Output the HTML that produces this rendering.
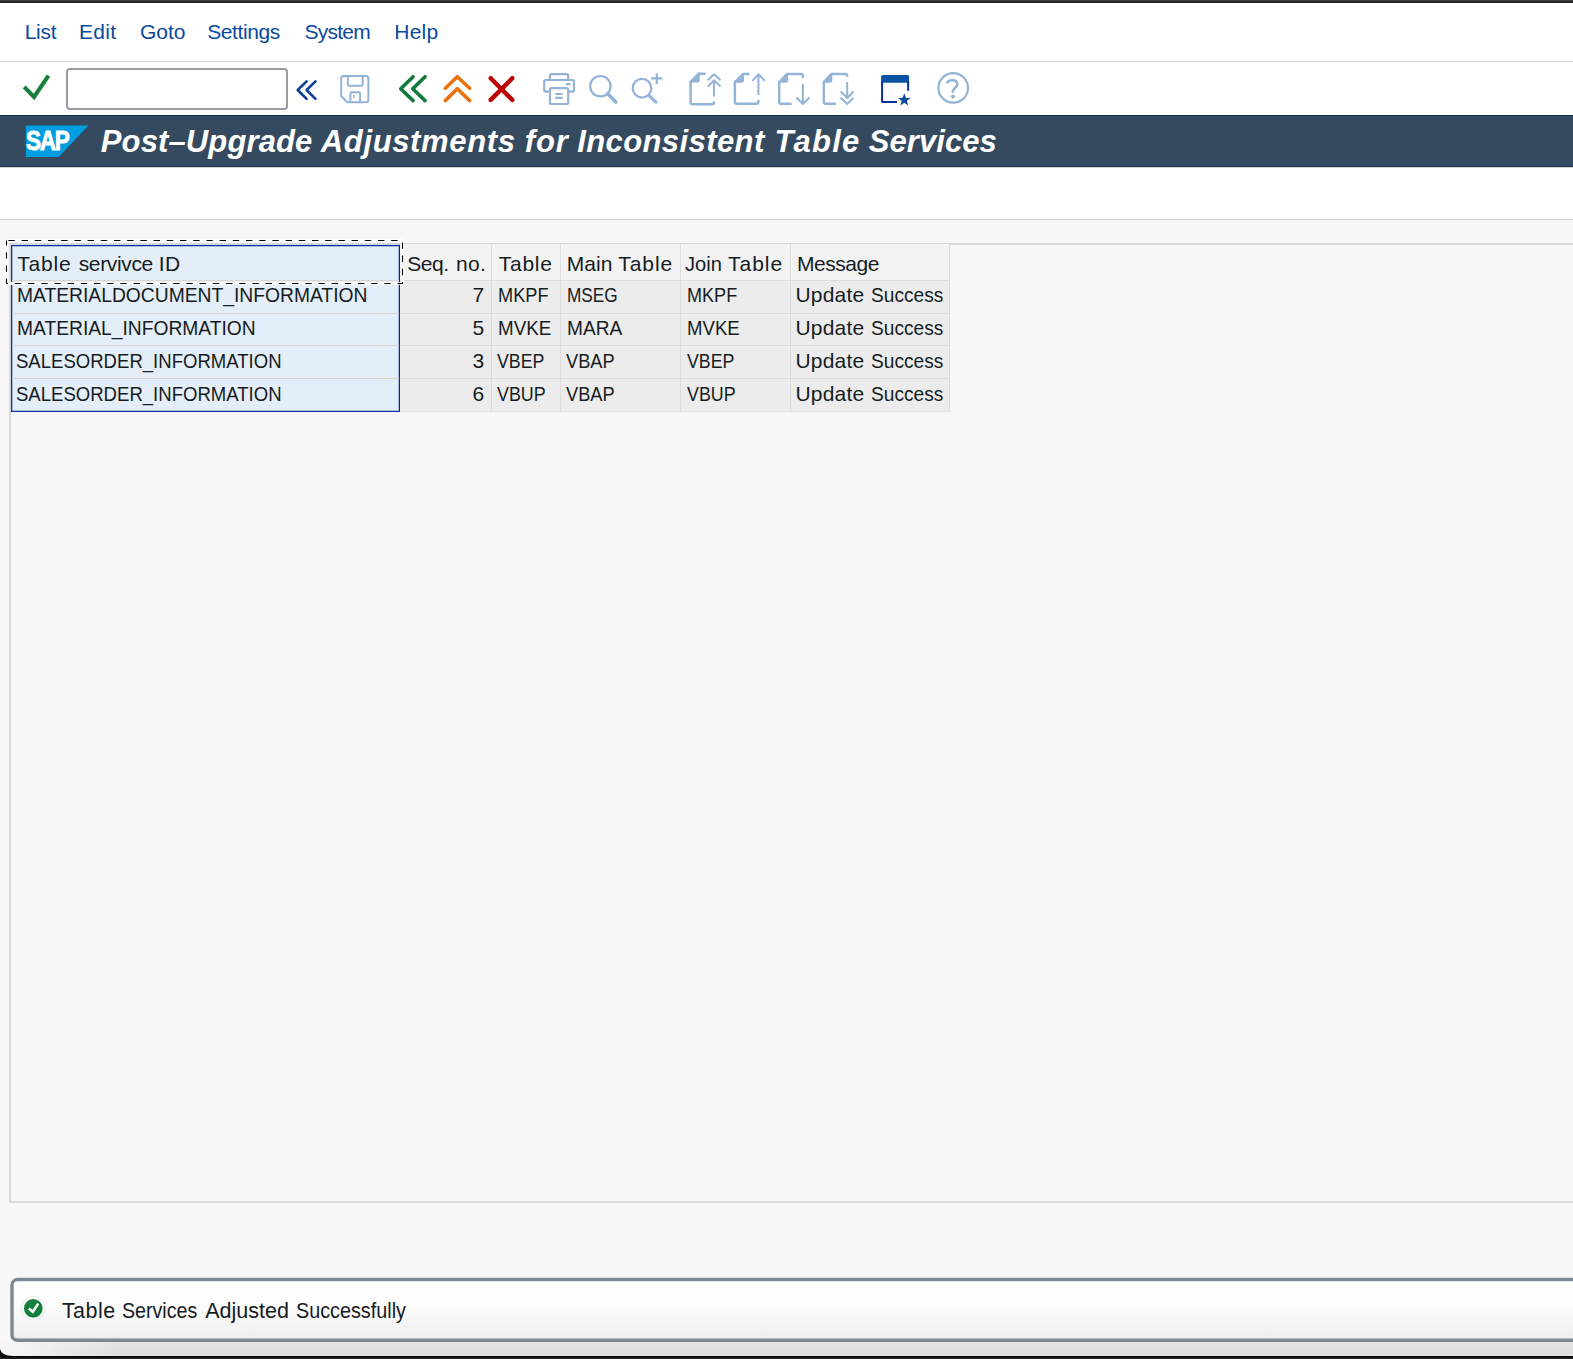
<!DOCTYPE html>
<html><head><meta charset="utf-8"><title>SAP</title>
<style>
*{box-sizing:border-box}
html,body{margin:0;padding:0}
body{width:1573px;height:1359px;overflow:hidden;position:relative;background:#f7f7f7;font-family:"Liberation Sans",sans-serif;color:#1d232b}
.a{position:absolute}
.t{position:absolute;white-space:pre;line-height:20px;font-size:20px}
#topband{left:0;top:0;width:1573px;height:3px;background:linear-gradient(#444,#1c1c1c)}
#upper{left:0;top:3px;width:1573px;height:216px;background:#fff}
#menuline{left:0;top:61px;width:1573px;height:1px;background:#d6d6d6}
#cmd{left:66px;top:68px;width:222px;height:42px;border:2px solid #959ca4;border-radius:4px;background:#fff}
#titlebar{left:0;top:115px;width:1573px;height:52px;background:#354a5f;border-top:1px solid #0c2c4b;border-bottom:1px solid #14334f}
#titleshadow{left:0;top:167px;width:1573px;height:1px;background:#d8d8d8}
#line219{left:0;top:219px;width:1573px;height:1px;background:#d3d3d3}
#cont-top{left:9px;top:243.25px;width:1564px;height:1.5px;background:#d8d8d8}
#cont-left{left:9px;top:243px;width:1.5px;height:959px;background:#d9d9d9}
#cont-bot{left:9px;top:1201px;width:1564px;height:1.5px;background:#d9d9d9}
.hdr{background:#f2f2f2}
.row{background:#ececec}
.vl{position:absolute;width:1px;background:#dcdcdc}
.hl{position:absolute;height:1px;background:#dcdcdc}
#selcol{left:11px;top:245px;width:389px;height:167px;border:1px solid #0b2fa0;box-shadow:inset 0 0 0 0.3px #0b2fa0;background:#e4eef8}
#botband{left:0;top:1356px;width:1573px;height:3px;background:linear-gradient(#000 0,#000 1px,#1c1c1c 1px)}
#belowstatus{left:0;top:1340px;width:1573px;height:16px;background:linear-gradient(to right,#f6f6f6 0,#f3f3f3 25px,rgba(243,243,243,0) 120px),linear-gradient(#e6e6e6 0,#e4e4e4 20%,#dcdcdc 85%,#e6e6e6 100%)}
</style></head><body>
<div id="topband" class="a"></div>
<div id="upper" class="a"></div>
<div class="t" style="left:24.70px;top:21.32px;font-size:21px;line-height:21px;color:#0a4a9c;font-weight:normal;font-style:normal;letter-spacing:-0.267px;">List</div>
<div class="t" style="left:79.00px;top:21.32px;font-size:21px;line-height:21px;color:#0a4a9c;font-weight:normal;font-style:normal;letter-spacing:0.333px;">Edit</div>
<div class="t" style="left:140.00px;top:21.32px;font-size:21px;line-height:21px;color:#0a4a9c;font-weight:normal;font-style:normal;letter-spacing:0.000px;">Goto</div>
<div class="t" style="left:207.20px;top:21.32px;font-size:21px;line-height:21px;color:#0a4a9c;font-weight:normal;font-style:normal;letter-spacing:-0.414px;">Settings</div>
<div class="t" style="left:304.40px;top:21.32px;font-size:21px;line-height:21px;color:#0a4a9c;font-weight:normal;font-style:normal;letter-spacing:-0.720px;">System</div>
<div class="t" style="left:394.30px;top:21.32px;font-size:21px;line-height:21px;color:#0a4a9c;font-weight:normal;font-style:normal;letter-spacing:0.233px;">Help</div>
<div id="menuline" class="a"></div>
<div id="cmd" class="a"></div>
<svg class="a" style="left:0;top:60px" width="1000" height="55" viewBox="0 60 1000 55">
<g fill="none" stroke-linejoin="miter">
<path d="M24.2 86.9 L34 97 L48.5 75.6" stroke="#14803c" stroke-width="4.1"/>
</g>
<g fill="none" stroke="#0a3f9a" stroke-width="2.6" stroke-linecap="round" stroke-linejoin="round">
<path d="M306.6 81.4 L297.7 90 L306.6 98.9"/><path d="M315.5 81.4 L306.6 90 L315.5 98.9"/>
</g>
<g fill="none" stroke="#93b3d7" stroke-width="2" stroke-linejoin="round">
<path d="M343.7 76 H366 Q368.4 76 368.4 78.5 V99.8 Q368.4 102.3 366 102.3 H347.2 L341.2 96 V78.5 Q341.2 76 343.7 76 Z"/>
<path d="M347.8 76 V84.2 Q347.8 85.7 349.3 85.7 H361.2 Q362.7 85.7 362.7 84.2 V76"/>
<path d="M350.4 102.3 V93.8 Q350.4 92.3 351.9 92.3 H358.6 Q360.1 92.3 360.1 93.8 V102.3"/>
<path d="M353.8 95 V98" stroke-width="1.6"/>
</g>
<g fill="none" stroke="#117b3b" stroke-width="3.6" stroke-linecap="round" stroke-linejoin="round">
<path d="M413.1 76.7 L400.7 88.7 L413.1 100.6"/><path d="M425.1 76.7 L412.7 88.7 L425.1 100.6"/>
</g>
<g fill="none" stroke="#e9730c" stroke-width="3.6" stroke-linecap="round" stroke-linejoin="round">
<path d="M445.3 88.2 L457.3 76.7 L469.7 88.2"/><path d="M445.3 100.6 L457.3 88.7 L469.7 100.6"/>
</g>
<g fill="none" stroke="#bb0000" stroke-width="4.4" stroke-linecap="round">
<path d="M490.7 78.2 L512.3 99.9"/><path d="M512.3 78.2 L490.7 99.9"/>
</g>
<g fill="none" stroke="#93b3d7" stroke-width="2.2" stroke-linejoin="round" stroke-linecap="round">
<path d="M550 80 V75.7 Q550 74.2 551.5 74.2 H566.7 Q568.2 74.2 568.2 75.7 V80"/>
<path d="M550 91.6 H545.7 Q544.2 91.6 544.2 90.1 V81.5 Q544.2 80 545.7 80 H572.5 Q574 80 574 81.5 V90.1 Q574 91.6 572.5 91.6 H568.2"/>
<path d="M550 89.7 Q550 88.2 551.5 88.2 H566.7 Q568.2 88.2 568.2 89.7 V102.5 Q568.2 104 566.7 104 H551.5 Q550 104 550 102.5 Z"/>
<path d="M555.3 94 H562.5 M555.3 97.9 H562.5 M566 84.1 H570.3" stroke-linecap="butt"/>
<circle cx="600.4" cy="86.2" r="10.2" stroke-width="2.2"/>
<path d="M607.6 93.6 L615.8 102" stroke-width="3.6"/>
<circle cx="642" cy="88.2" r="9.3" stroke-width="2.2"/>
<path d="M648.9 95.3 L655.9 102.1" stroke-width="3.2"/>
<path d="M651.2 78.3 H662.4 M656.8 73.4 V84.1" stroke-linecap="butt"/>
</g>
<g fill="none" stroke="#93b3d7" stroke-width="2.4" stroke-linejoin="round">
<path d="M698 73.7 H705.5 M690.6 81.2 V102.3 Q690.6 104.3 692.6 104.3 H712 Q714 104.3 714 102.3 V101.3"/>
<path d="M714 80.3 V96.6 M707.7 86.6 L714 80.3 L720.6 86.6 M707.7 80.3 L714 74.3 L720.6 80.3" stroke-width="2"/>
<path d="M742.4 74 H749.5 M734.9 81.5 V101.8 Q734.9 103.8 736.9 103.8 H756.4 Q758.4 103.8 758.4 101.8 V99.8"/>
<path d="M758.4 74.3 V94.9 M752.4 80.9 L758.4 74.3 L765 80.9" stroke-width="2"/>
<path d="M786.3 74 H800.9 Q802.9 74 802.9 76 V78.3 M779.2 81.5 V101.8 Q779.2 103.8 781.2 103.8 H791.7"/>
<path d="M802.9 83.7 V103.5 M796.3 97.5 L802.9 104 L809.5 97.5" stroke-width="2"/>
<path d="M830.6 74 H845.2 Q847.2 74 847.2 76 V76.8 M823.8 81.5 V101.8 Q823.8 103.8 825.8 103.8 H835.8"/>
<path d="M847.2 82 V97.7 M840.7 91.5 L847.2 98 L853.5 91.5 M840.7 97.7 L847.2 104 L853.5 97.7" stroke-width="2"/>
</g>
<g fill="#93b3d7">
<path d="M689.5 81.2 L698 72.6 L699.7 72.6 L699.7 80.6 Q699.7 82.6 697.7 82.6 L689.5 82.6 Z"/>
<path d="M733.8 81.5 L742.4 72.9 L744 72.9 L744 80.8 Q744 82.8 742 82.8 L733.8 82.8 Z"/>
<path d="M778.1 81.5 L786.3 72.9 L788 72.9 L788 80.8 Q788 82.8 786 82.8 L778.1 82.8 Z"/>
<path d="M822.7 81.5 L830.6 72.9 L832.3 72.9 L832.3 80.8 Q832.3 82.8 830.3 82.8 L822.7 82.8 Z"/>
</g>
<path d="M883 74.9 H907.6 Q909.1 74.9 909.1 76.4 V82.8 H881.1 V76.8 Q881.1 74.9 883 74.9 Z" fill="#0a52a2"/>
<path d="M882.1 82 V101.5 Q882.1 102 882.6 102 H897 M908.1 82 V90.8" fill="none" stroke="#0b2f98" stroke-width="2"/>
<path d="M904.3 93.3 L905.9 97.8 L910.6 97.9 L906.9 100.8 L908.2 105.4 L904.3 102.7 L900.4 105.4 L901.7 100.8 L898 97.9 L902.7 97.8 Z" fill="#0a4a9f"/>
<g fill="none" stroke="#93b3d7" stroke-width="2.2" stroke-linecap="round">
<circle cx="953.2" cy="87.9" r="14.8"/>
<path d="M946.9 83.4 Q948 80.2 952.4 80.2 Q957.3 80.2 957.3 84 Q957.3 86.6 954.6 88.4 Q952.7 89.8 952.7 92.7" stroke-width="2.5" stroke-linecap="butt"/>
</g>
<circle cx="953" cy="96.5" r="2" fill="#93b3d7"/>
</svg>
<div id="titlebar" class="a"></div>
<div id="titleshadow" class="a"></div>
<svg class="a" style="left:20px;top:120px" width="80" height="44" viewBox="20 120 80 44">
<path d="M25.85 125.6 H88.4 L58.7 156.9 H25.85 Z" fill="#009de0"/>
</svg>
<div class="t" style="left:26.3px;top:128.3px;font-size:27px;line-height:27px;font-weight:bold;color:#fff;transform:scaleX(0.835);transform-origin:0 0;letter-spacing:-1.5px;-webkit-text-stroke:0.9px #fff">SAP</div>
<div class="t" style="left:100.84px;top:125.75px;font-size:31px;line-height:31px;color:#fff;font-weight:bold;font-style:italic;letter-spacing:0.120px">Post–Upgrade</div>
<div class="t" style="left:320.85px;top:125.75px;font-size:31px;line-height:31px;color:#fff;font-weight:bold;font-style:italic;letter-spacing:0.632px">Adjustments</div>
<div class="t" style="left:524.70px;top:125.75px;font-size:31px;line-height:31px;color:#fff;font-weight:bold;font-style:italic;letter-spacing:0.902px">for</div>
<div class="t" style="left:577.14px;top:125.75px;font-size:31px;line-height:31px;color:#fff;font-weight:bold;font-style:italic;letter-spacing:0.412px">Inconsistent</div>
<div class="t" style="left:774.48px;top:125.75px;font-size:31px;line-height:31px;color:#fff;font-weight:bold;font-style:italic;letter-spacing:1.244px">Table</div>
<div class="t" style="left:868.80px;top:125.75px;font-size:31px;line-height:31px;color:#fff;font-weight:bold;font-style:italic;letter-spacing:0.067px">Services</div>
<div id="line219" class="a"></div>
<div id="cont-top" class="a"></div>
<div id="cont-left" class="a"></div>
<div id="cont-bot" class="a"></div>
<div class="a hdr" style="left:400px;top:244px;width:549.5px;height:36px"></div>
<div class="a row" style="left:400px;top:280px;width:549.5px;height:131.5px"></div>
<div class="hl" style="left:400px;top:280px;width:549.5px"></div>
<div class="hl" style="left:400px;top:312.5px;width:549.5px"></div>
<div class="hl" style="left:400px;top:345.4px;width:549.5px"></div>
<div class="hl" style="left:400px;top:378.2px;width:549.5px"></div>
<div class="hl" style="left:400px;top:411px;width:549.5px;background:#e4e4e4"></div>
<div class="vl" style="left:491px;top:244px;height:167.5px"></div>
<div class="vl" style="left:560px;top:244px;height:167.5px"></div>
<div class="vl" style="left:680px;top:244px;height:167.5px"></div>
<div class="vl" style="left:790px;top:244px;height:167.5px"></div>
<div class="vl" style="left:949px;top:244px;height:167.5px"></div>
<div id="selcol" class="a"></div>
<div class="hl" style="left:12.3px;top:280px;width:386.4px;background:#d9d6d2"></div>
<div class="hl" style="left:12.3px;top:312.5px;width:386.4px;background:#d9d6d2"></div>
<div class="hl" style="left:12.3px;top:345.4px;width:386.4px;background:#d9d6d2"></div>
<div class="hl" style="left:12.3px;top:378.2px;width:386.4px;background:#d9d6d2"></div>
<div class="t" style="left:17.20px;top:253.02px;font-size:21px;line-height:21px;color:#161c22;font-weight:normal;font-style:normal;letter-spacing:0.819px">Table</div>
<div class="t" style="left:78.73px;top:253.02px;font-size:21px;line-height:21px;color:#161c22;font-weight:normal;font-style:normal;letter-spacing:-0.348px">servivce</div>
<div class="t" style="left:158.71px;top:253.02px;font-size:21px;line-height:21px;color:#161c22;font-weight:normal;font-style:normal;letter-spacing:0.531px">ID</div>
<div class="t" style="left:407.18px;top:253.02px;font-size:21px;line-height:21px;color:#161c22;font-weight:normal;font-style:normal;letter-spacing:-0.392px">Seq.</div>
<div class="t" style="left:456.03px;top:253.02px;font-size:21px;line-height:21px;color:#161c22;font-weight:normal;font-style:normal;letter-spacing:0.286px">no.</div>
<div class="t" style="left:498.70px;top:253.02px;font-size:21px;line-height:21px;color:#161c22;font-weight:normal;font-style:normal;letter-spacing:0.769px">Table</div>
<div class="t" style="left:566.68px;top:253.02px;font-size:21px;line-height:21px;color:#161c22;font-weight:normal;font-style:normal;letter-spacing:0.067px">Main</div>
<div class="t" style="left:618.20px;top:253.02px;font-size:21px;line-height:21px;color:#161c22;font-weight:normal;font-style:normal;letter-spacing:0.969px">Table</div>
<div class="t" style="left:685.32px;top:253.02px;font-size:21px;line-height:21px;color:#161c22;font-weight:normal;font-style:normal;transform:scaleX(0.9587);transform-origin:0 0">Join</div>
<div class="t" style="left:728.10px;top:253.02px;font-size:21px;line-height:21px;color:#161c22;font-weight:normal;font-style:normal;letter-spacing:0.944px">Table</div>
<div class="t" style="left:796.88px;top:253.02px;font-size:21px;line-height:21px;color:#161c22;font-weight:normal;font-style:normal;letter-spacing:-0.451px">Message</div>
<div class="t" style="left:16.57px;top:284.22px;font-size:21px;line-height:21px;color:#161c22;font-weight:normal;font-style:normal;transform:scaleX(0.9175);transform-origin:0 0;">MATERIALDOCUMENT_INFORMATION</div>
<div class="t" style="left:400px;width:84.3px;text-align:right;top:284.22px;font-size:21px;line-height:21px;color:#161c22">7</div>
<div class="t" style="left:497.57px;top:284.22px;font-size:21px;line-height:21px;color:#161c22;font-weight:normal;font-style:normal;transform:scaleX(0.8661);transform-origin:0 0;">MKPF</div>
<div class="t" style="left:566.71px;top:284.22px;font-size:21px;line-height:21px;color:#161c22;font-weight:normal;font-style:normal;transform:scaleX(0.8207);transform-origin:0 0;">MSEG</div>
<div class="t" style="left:686.98px;top:284.22px;font-size:21px;line-height:21px;color:#161c22;font-weight:normal;font-style:normal;transform:scaleX(0.8607);transform-origin:0 0;">MKPF</div>
<div class="t" style="left:795.44px;top:284.22px;font-size:21px;line-height:21px;color:#161c22;font-weight:normal;font-style:normal;letter-spacing:0.202px">Update</div>
<div class="t" style="left:871.11px;top:284.22px;font-size:21px;line-height:21px;color:#161c22;font-weight:normal;font-style:normal;transform:scaleX(0.9106);transform-origin:0 0">Success</div>
<div class="t" style="left:16.57px;top:317.02px;font-size:21px;line-height:21px;color:#161c22;font-weight:normal;font-style:normal;transform:scaleX(0.9161);transform-origin:0 0;">MATERIAL_INFORMATION</div>
<div class="t" style="left:400px;width:84.3px;text-align:right;top:317.02px;font-size:21px;line-height:21px;color:#161c22">5</div>
<div class="t" style="left:497.51px;top:317.02px;font-size:21px;line-height:21px;color:#161c22;font-weight:normal;font-style:normal;transform:scaleX(0.8947);transform-origin:0 0;">MVKE</div>
<div class="t" style="left:566.53px;top:317.02px;font-size:21px;line-height:21px;color:#161c22;font-weight:normal;font-style:normal;transform:scaleX(0.9093);transform-origin:0 0;">MARA</div>
<div class="t" style="left:686.93px;top:317.02px;font-size:21px;line-height:21px;color:#161c22;font-weight:normal;font-style:normal;transform:scaleX(0.8851);transform-origin:0 0;">MVKE</div>
<div class="t" style="left:795.44px;top:317.02px;font-size:21px;line-height:21px;color:#161c22;font-weight:normal;font-style:normal;letter-spacing:0.202px">Update</div>
<div class="t" style="left:871.11px;top:317.02px;font-size:21px;line-height:21px;color:#161c22;font-weight:normal;font-style:normal;transform:scaleX(0.9106);transform-origin:0 0">Success</div>
<div class="t" style="left:15.52px;top:349.92px;font-size:21px;line-height:21px;color:#161c22;font-weight:normal;font-style:normal;transform:scaleX(0.8832);transform-origin:0 0;">SALESORDER_INFORMATION</div>
<div class="t" style="left:400px;width:84.3px;text-align:right;top:349.92px;font-size:21px;line-height:21px;color:#161c22">3</div>
<div class="t" style="left:497.30px;top:349.92px;font-size:21px;line-height:21px;color:#161c22;font-weight:normal;font-style:normal;transform:scaleX(0.8455);transform-origin:0 0;">VBEP</div>
<div class="t" style="left:566.40px;top:349.92px;font-size:21px;line-height:21px;color:#161c22;font-weight:normal;font-style:normal;transform:scaleX(0.8673);transform-origin:0 0;">VBAP</div>
<div class="t" style="left:686.55px;top:349.92px;font-size:21px;line-height:21px;color:#161c22;font-weight:normal;font-style:normal;transform:scaleX(0.8445);transform-origin:0 0;">VBEP</div>
<div class="t" style="left:795.44px;top:349.92px;font-size:21px;line-height:21px;color:#161c22;font-weight:normal;font-style:normal;letter-spacing:0.202px">Update</div>
<div class="t" style="left:871.11px;top:349.92px;font-size:21px;line-height:21px;color:#161c22;font-weight:normal;font-style:normal;transform:scaleX(0.9106);transform-origin:0 0">Success</div>
<div class="t" style="left:15.52px;top:382.92px;font-size:21px;line-height:21px;color:#161c22;font-weight:normal;font-style:normal;transform:scaleX(0.8832);transform-origin:0 0;">SALESORDER_INFORMATION</div>
<div class="t" style="left:400px;width:84.3px;text-align:right;top:382.92px;font-size:21px;line-height:21px;color:#161c22">6</div>
<div class="t" style="left:497.30px;top:382.92px;font-size:21px;line-height:21px;color:#161c22;font-weight:normal;font-style:normal;transform:scaleX(0.8518);transform-origin:0 0;">VBUP</div>
<div class="t" style="left:566.40px;top:382.92px;font-size:21px;line-height:21px;color:#161c22;font-weight:normal;font-style:normal;transform:scaleX(0.8673);transform-origin:0 0;">VBAP</div>
<div class="t" style="left:686.55px;top:382.92px;font-size:21px;line-height:21px;color:#161c22;font-weight:normal;font-style:normal;transform:scaleX(0.8500);transform-origin:0 0;">VBUP</div>
<div class="t" style="left:795.44px;top:382.92px;font-size:21px;line-height:21px;color:#161c22;font-weight:normal;font-style:normal;letter-spacing:0.202px">Update</div>
<div class="t" style="left:871.11px;top:382.92px;font-size:21px;line-height:21px;color:#161c22;font-weight:normal;font-style:normal;transform:scaleX(0.9106);transform-origin:0 0">Success</div>
<svg class="a" style="left:0;top:230px" width="420" height="60" viewBox="0 230 420 60"><rect x="6.5" y="240.5" width="396" height="43" fill="none" stroke="#fff" stroke-width="2.6"/><rect x="6.5" y="240.5" width="396" height="43" fill="none" stroke="#000" stroke-width="1.1" stroke-dasharray="6.4 6.8" stroke-dashoffset="-1.9"/></svg>
<div id="belowstatus" class="a"></div>
<svg class="a" style="left:0;top:1270px" width="1573" height="89" viewBox="0 1270 1573 89">
<defs><linearGradient id="sg" x1="0" y1="0" x2="0" y2="1"><stop offset="0" stop-color="#ffffff"/><stop offset="0.45" stop-color="#fcfcfc"/><stop offset="1" stop-color="#eeeeee"/></linearGradient></defs>
<rect x="12" y="1279.5" width="1600" height="60.8" rx="5.5" fill="url(#sg)" stroke="#7f8892" stroke-width="3.4"/>
<path d="M0 1349 Q1.5 1355.8 13 1356 L0 1356 Z" fill="#0a0a0a"/>
</svg>
<svg class="a" style="left:18px;top:1294px" width="30" height="30" viewBox="18 1294 30 30">
<circle cx="33.3" cy="1308.3" r="11.9" fill="none" stroke="#dfece3" stroke-width="0.8"/>
<circle cx="33.3" cy="1308.3" r="9.3" fill="#14803d"/>
<path d="M28.9 1308.4 L32.8 1311.8 L38.2 1303.6" fill="none" stroke="#fff" stroke-width="2.6"/>
</svg>
<div class="t" style="left:61.89px;top:1300.70px;font-size:21.5px;line-height:21.5px;color:#161c22;font-weight:normal;font-style:normal;letter-spacing:0.468px">Table</div>
<div class="t" style="left:122.27px;top:1300.70px;font-size:21.5px;line-height:21.5px;color:#161c22;font-weight:normal;font-style:normal;transform:scaleX(0.9130);transform-origin:0 0">Services</div>
<div class="t" style="left:205.18px;top:1300.70px;font-size:21.5px;line-height:21.5px;color:#161c22;font-weight:normal;font-style:normal;letter-spacing:0.032px">Adjusted</div>
<div class="t" style="left:296.36px;top:1300.70px;font-size:21.5px;line-height:21.5px;color:#161c22;font-weight:normal;font-style:normal;transform:scaleX(0.9201);transform-origin:0 0">Successfully</div>
<div id="botband" class="a"></div>
</body></html>
